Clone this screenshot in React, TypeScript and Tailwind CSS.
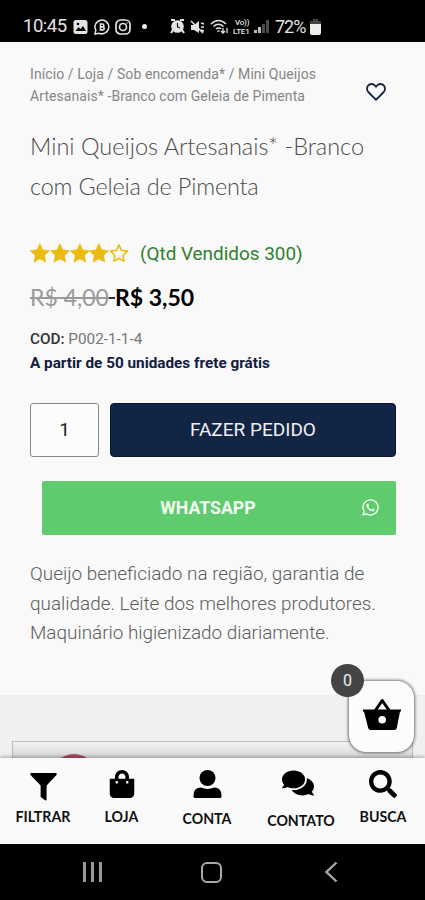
import React from "react";
import { FaShoppingBag, FaComments, FaSearch, FaWhatsapp } from "react-icons/fa";

function StatusBar() {
  return (
    <header className="flex h-[42px] shrink-0 items-center bg-black pt-[11px] pl-[23px] text-[#e4e4e4]">
      <span className="w-[44px] whitespace-nowrap text-[18.5px] leading-none tracking-[-0.5px]">10:45</span>
      <svg className="ml-[6px] h-[14px] w-[15px]" viewBox="0 0 15 14">
        <rect x="0.5" y="0" width="14" height="14" rx="2.5" fill="currentColor" />
        <path d="M2.5 11 5.5 7l2 2 2.5-3 3 5z" fill="#000" />
        <circle cx="5" cy="4" r="1.3" fill="#000" />
      </svg>
      <svg className="ml-[6px] h-4 w-4" viewBox="0 0 16 16" fill="none" stroke="currentColor" strokeWidth="1.5">
        <path d="M1 15l.8-3.8A6.9 6.9 0 1 1 5 14.2z" />
        <path d="M6.5 5h1.9a1.4 1.4 0 0 1 0 2.9H6.5zM6.5 7.9h2.2a1.5 1.5 0 0 1 0 3H6.5z" strokeWidth="1.6" />
      </svg>
      <svg className="ml-[5px] h-4 w-4" viewBox="0 0 16 16" fill="none" stroke="currentColor" strokeWidth="1.7">
        <rect x="1" y="1" width="14" height="14" rx="4.5" />
        <circle cx="8" cy="8" r="3.5" />
        <path d="M11.5 4h1" />
      </svg>
      <span className="ml-[11px] size-[5px] rounded-full bg-[#eeeeee]" />
      <svg className="ml-[23px] h-[15px] w-[15px]" viewBox="0 0 15 15">
        <path d="M1 1h4M10 1h4M3 11 1 14M12 11l2 3" stroke="currentColor" strokeWidth="2.2" />
        <circle cx="7.5" cy="7.5" r="6.3" fill="currentColor" />
        <path d="M7.5 4v4l2.5 1" stroke="#000" strokeWidth="1.1" fill="none" />
      </svg>
      <svg className="ml-[5px] h-[14px] w-[15px]" viewBox="0 0 15 14">
        <path d="M1 5h3l5-4v12L4 10H1z" fill="currentColor" />
        <path d="M1 1l12 12M11 3l3 1M11 7h3M11 10l3 1" stroke="currentColor" strokeWidth="1.5" />
      </svg>
      <svg className="ml-[5px] h-[15px] w-[19px]" viewBox="0 0 19 15" fill="none" stroke="currentColor" strokeWidth="1.6">
        <path d="M1 5q7.5-7 15 0M3.5 7.5q5-4.5 10 0M6 10q2.500-2 5 0" />
        <path d="M7.5 12h2M13 9v5m-2-2 2 2 2-2M17 14V9" strokeWidth="1.3" />
      </svg>
      <span className="ml-[4px] flex w-[19px] flex-col whitespace-nowrap text-[8px] leading-[9px] font-medium tracking-[-0.2px]">
        <span className="pl-[2px]">Vo))</span>
        <span>LTE1</span>
      </span>
      <svg className="ml-[2px] h-[13px] w-[15px]" viewBox="0 0 15 13">
        <path d="M0 10h3v3H0zM4 7h3v6H4z" fill="#bcbcbc" />
        <path d="M8 4h3v9H8zM12 0h3v13h-3z" fill="#4b4b4b" />
      </svg>
      <span className="ml-[6px] w-[33px] whitespace-nowrap text-[18px] leading-none tracking-[-1px]">72%</span>
      <svg className="ml-[2px] h-4 w-[11px]" viewBox="0 0 11 16">
        <path d="M3 0h5v2h3v4H0V2h3z" fill="#444" />
        <path d="M0 5h11v9q0 2-2 2H2q-2 0-2-2z" fill="#eee" />
      </svg>
    </header>
  );
}

function Star({ filled }: { filled: boolean }) {
  return (
    <svg className="h-[20px] w-[19.8px] overflow-visible" viewBox="0 0 20 20" fill={filled ? "#eabc10" : "none"} stroke="#eabc10" strokeWidth={filled ? 0.6 : 1.6} strokeLinejoin="round">
      {filled ? (
        <path d="M10 .5 12.9 6.8 19.7 7.7 14.7 12.5 16 19.2 10 16 4 19.2 5.3 12.5 .3 7.7 7.1 6.8z" />
      ) : (
        <path d="M10 1.8 12.5 7.3 18.5 8.1 14.1 12.3 15.2 18.2 10 15.3 4.8 18.2 5.9 12.3 1.5 8.1 7.5 7.3z" />
      )}
    </svg>
  );
}

function Product() {
  return (
    <main className="h-[653px] shrink-0 pl-[30px] pr-[29px] pt-[22px]">
      <div className="flex h-[62px] items-start justify-between">
        <nav className="whitespace-nowrap text-[14px] leading-[21.5px] text-[#858585]">
          <div className="tracking-[0.08px]">Início / Loja / Sob encomenda* / Mini Queijos</div>
          <div className="tracking-[0.08px]">Artesanais* -Branco com Geleia de Pimenta</div>
        </nav>
        <svg className="mt-[19px] mr-[10px] h-[18px] w-[20px]" viewBox="0 0 20 18" fill="none" stroke="#142342" strokeWidth="1.8" strokeLinejoin="round">
          <path d="M10 16.8 2.300 9C.2 6.700 .8 3 3.200 1.600 5.600.4 8.300 1.300 10 3.800c1.700-2.500 4.400-3.400 6.800-2.200C19.200 3 19.800 6.700 17.700 9z" />
        </svg>
      </div>
      <h1 className="h-[111px] whitespace-nowrap font-['Lato'] text-[23.5px] leading-[40px] font-light text-[#4c4c4c]">
        <div>Mini Queijos Artesanais* -Branco</div>
        <div className="tracking-[-0.2px]">com Geleia de Pimenta</div>
      </h1>
      <div className="flex h-[34px] items-center">
        <div className="flex w-[110px] pb-[2px]">
          <Star filled />
          <Star filled />
          <Star filled />
          <Star filled />
          <Star filled={false} />
        </div>
        <span className="whitespace-nowrap text-[18.9px] text-[#2f802f]">(Qtd Vendidos 300)</span>
      </div>
      <div className="flex h-[53px] items-center whitespace-nowrap font-['Lato'] text-[23px]">
        <del className="w-[79px] text-[#999] decoration-2">R$ 4,00</del>
        <span className="mt-px h-[2px] w-[6px] bg-[#333]" />
        <span className="font-bold text-black">R$ 3,50</span>
      </div>
      <div className="h-[78px] whitespace-nowrap pt-[3px]">
        <div className="text-[15.3px] leading-[24px] text-[#777]"><b className="font-medium text-[#333]">COD:</b> P002-1-1-4</div>
        <div className="text-[15.3px] leading-[24px] font-bold text-[#111c3e]">A partir de 50 unidades frete grátis</div>
      </div>
      <div className="mt-px flex h-[54px] gap-[11px]">
        <div className="flex w-[69px] items-center justify-center rounded-[3px] border border-[#888] bg-[#fcfcfc] text-[19px] text-[#222]">1</div>
        <button className="flex-1 rounded-[4px] border border-[#081638] bg-[#122545] text-[19px] text-[#f0f0f0]">FAZER PEDIDO</button>
      </div>
      <button className="mt-[24px] ml-[12px] flex h-[53.5px] w-[354px] items-center rounded-[2px] bg-[#5fcb6e] text-[#f4fff4]">
        <span className="flex-1 pt-px pl-[13px] text-center text-[17.7px] font-bold">WHATSAPP</span>
        <FaWhatsapp className="mr-[16px] size-[19px]" />
      </button>
      <p className="mt-[24.5px] whitespace-nowrap text-[18.9px] leading-[29.5px] font-light text-[#5c5c5c]">
        <span className="block">Queijo beneficiado na região, garantia de</span>
        <span className="block">qualidade. Leite dos melhores produtores.</span>
        <span className="block">Maquinário higienizado diariamente.</span>
      </p>
    </main>
  );
}

function CartButton() {
  return (
    <div className="absolute top-[681px] left-[349px] flex h-[71px] w-[65px] items-center justify-center rounded-[17px] bg-[#fcfcfc] pb-[5px] shadow-[0_0_3px_1px_#0008]">
      <svg className="h-[34px] w-[38px]" viewBox="0 0 38 34">
        <path d="M12 14 19.2 3.500 26.500 14" fill="none" stroke="#000" strokeWidth="3" strokeLinejoin="round" />
        <path fillRule="evenodd" d="M0 12.5h38v2h-1L33.8 31q-.4 2-2.4 2H7.6q-2 0-2.4-2L1 14.5H0zM19.2 19a3.800 3.800 0 1 0 0 7.600a3.800 3.800 0 1 0 0-7.600z" />
      </svg>
      <span className="absolute -top-[17px] -left-[18px] flex size-[33px] items-center justify-center rounded-full bg-[#444] text-[16px] text-[#eee]">0</span>
    </div>
  );
}

export default function App() {
  return (
    <div className="relative flex h-[900px] w-[425px] flex-col overflow-hidden bg-[#f9f9f9] font-['Roboto',sans-serif]">
      <StatusBar />
      <Product />
      <section className="h-[63px] shrink-0 overflow-hidden bg-[#f0f0f0] px-[12px] pt-[46px]">
        <div className="h-[60px] border border-[#bdbdbd] bg-gradient-to-b from-[#f5f5f5] from-0% to-[#d0d0d0] to-[18px] pl-[38px] pt-[12px]">
          <div className="size-[46px] rounded-full bg-[#b04b62]" />
        </div>
      </section>
      <nav className="relative h-[86px] shrink-0 bg-[#fafafa] shadow-[0_-1px_4px_#0005]">
        <div className="flex font-['Lato'] text-[14.2px] leading-[18px] font-bold text-[#111]">
          <a className="flex w-[86px] flex-col items-center pt-[15px]">
            <svg className="h-[28px] w-[27px]" viewBox="0 0 27 28"><path d="M.8 0h25.400q1.200 1-.2 2.500L16.600 12.500v14.200q-.5 1.300-2 .3l-4-3.300V12.500L1 2.500Q-.4 1 .8 0z" /></svg>
            <span className="mt-[7px]">FILTRAR</span>
          </a>
          <a className="flex w-[71px] flex-col items-center pt-[12px]"><FaShoppingBag className="size-[28px] text-black" /><span className="mt-[10px]">LOJA</span></a>
          <a className="flex w-[100px] flex-col items-center pt-[12px]">
            <svg className="h-[28px] w-[29px]" viewBox="0 0 29 28"><circle cx="14.5" cy="8" r="8" /><path d="M8 17.500q6.500 2.800 13 0 7.500 0 7.500 8v1q0 1.500-1.500 1.500H2q-1.500 0-1.500-1.500v-1q0-8 7.500-8z" /></svg>
            <span className="mt-[12px]">CONTA</span>
          </a>
          <a className="flex w-[88px] flex-col items-center pt-[9px]"><FaComments className="mr-[6px] size-[32px] text-black" /><span className="mt-[13px]">CONTATO</span></a>
          <a className="flex w-[76px] flex-col items-center pt-[12px]"><FaSearch className="size-[28px] text-black" /><span className="mt-[10px]">BUSCA</span></a>
        </div>
      </nav>
      <CartButton />
      <footer className="relative flex h-[56px] shrink-0 items-center bg-black pl-[83px]">
        <div className="flex w-[19px] justify-between">
          <i className="h-[20px] w-[3px] bg-[#999]" />
          <i className="h-[20px] w-[3px] bg-[#999]" />
          <i className="h-[20px] w-[3px] bg-[#999]" />
        </div>
        <div className="ml-[99px] h-[21px] w-[21px] rounded-[6px] border-2 border-[#aaa]" />
        <svg className="ml-[103px] h-[22px] w-[13px]" viewBox="0 0 13 22" fill="none" stroke="#aaa" strokeWidth="2.3"><path d="M11.5 1.5 1.5 11l10 9.5" /></svg>
      </footer>
    </div>
  );
}
